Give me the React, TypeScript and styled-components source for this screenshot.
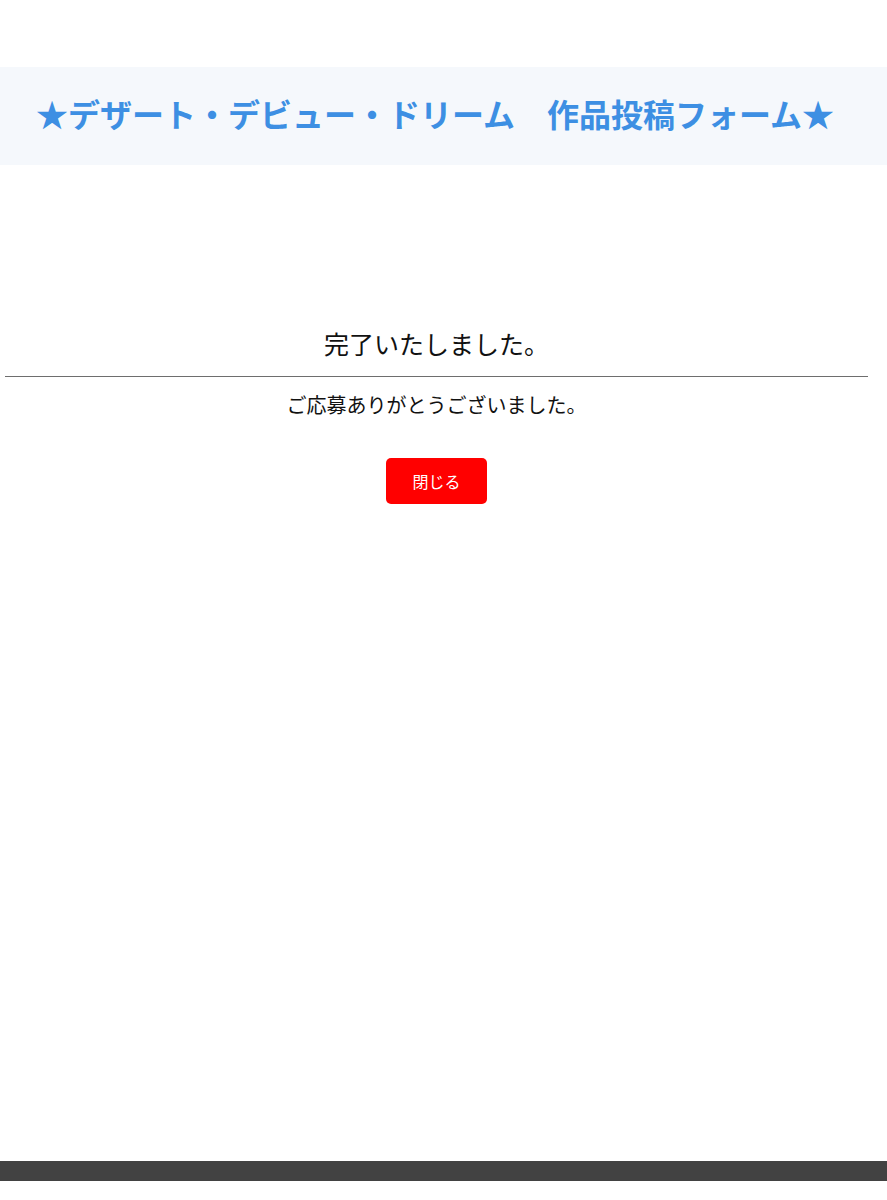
import styled, { createGlobalStyle } from "styled-components";

const GlobalStyle = createGlobalStyle`
  html, body {
    margin: 0;
    padding: 0;
    background: #ffffff;
    font-family: "Noto Sans CJK JP", "Noto Sans", sans-serif;
  }
`;

function App() {
  return (
    <>
      <GlobalStyle />
      <Page>
        <Header>
          <Title>★デザート・デビュー・ドリーム　作品投稿フォーム★</Title>
        </Header>
        <Main>
          <Heading>完了いたしました。</Heading>
          <Message>ご応募ありがとうございました。</Message>
          <CloseButton type="button">閉じる</CloseButton>
        </Main>
        <Footer />
      </Page>
    </>
  );
}

const Page = styled.div`
  display: flex;
  flex-direction: column;
  min-height: 1200px;
  padding-top: 67px;
  padding-bottom: 19px;
  box-sizing: border-box;
`;

const Header = styled.header`
  background: #f5f8fc;
  height: 98px;
  box-sizing: border-box;
  display: flex;
  align-items: center;
  padding: 0 0 6px 36px;
`;

const Title = styled.h1`
  margin: 0;
  font-size: 32px;
  font-weight: bold;
  color: #3d8fe3;
  letter-spacing: 0;
  white-space: nowrap;
`;

const Main = styled.main`
  flex: 1;
  margin: 0 19px 0 5px;
  display: flex;
  flex-direction: column;
  align-items: center;
  padding-top: 160px;
`;

const Heading = styled.h2`
  width: 100%;
  margin: 0;
  padding-bottom: 15px;
  border-bottom: 1px solid #6e6e6e;
  text-align: center;
  font-size: 25px;
  font-weight: normal;
  line-height: 36px;
  color: #111;
`;

const Message = styled.p`
  margin: 14px 0 0;
  font-size: 20px;
  line-height: 28px;
  color: #111;
`;

const CloseButton = styled.button`
  margin-top: 39px;
  width: 101px;
  height: 46px;
  border: none;
  border-radius: 5px;
  background: #ff0000;
  color: #ffffff;
  font-family: "Noto Sans CJK JP", sans-serif;
  font-size: 16px;
  cursor: pointer;
`;

const Footer = styled.footer`
  height: 20px;
  background: #424242;
`;

export default App;
